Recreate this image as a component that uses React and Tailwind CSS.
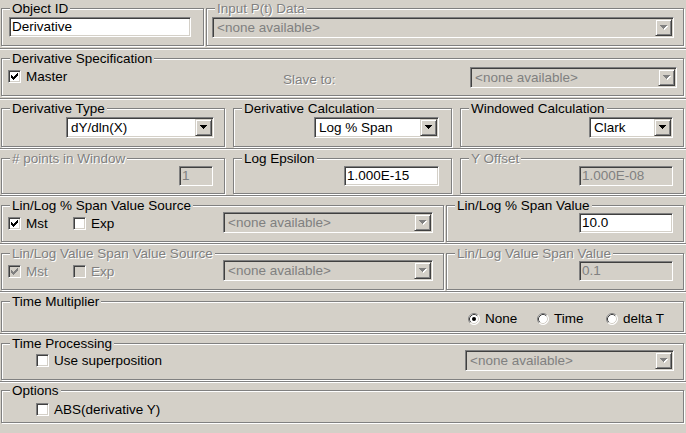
import React from "react";

const disabledText = "text-[#808080] [text-shadow:1px_1px_0_#fff]";
const sunken =
  "border border-t-[#808080] border-l-[#808080] border-b-white border-r-white p-[1px] shadow-[inset_1px_1px_0_#404040,inset_-1px_-1px_0_#d4d0c8]";
const sep = "border-t border-[#808080] shadow-[inset_0_1px_0_#fff]";

function Group({ label, disabled, className = "", children }) {
  return (
    <div
      className={`relative shrink-0 border border-[#808080] shadow-[inset_1px_1px_0_#fff,1px_1px_0_#fff] ${className}`}
    >
      <span
        className={`absolute -top-[8px] left-[8px] px-[2px] bg-[#d4d0c8] leading-[15px] whitespace-nowrap ${
          disabled ? disabledText : "text-black"
        }`}
      >
        {label}
      </span>
      {children}
    </div>
  );
}

function Arrow({ disabled }) {
  const c = disabled ? "#808080" : "#000";
  const rows = [
    [0, 0, 7],
    [1, 1, 5],
    [2, 2, 3],
    [3, 3, 1],
  ];
  return (
    <svg width="8" height="5" shapeRendering="crispEdges" className="block">
      {disabled &&
        rows.map(([x, y, w]) => (
          <rect key={"s" + y} x={x + 1} y={y + 1} width={w} height="1" fill="#fff" />
        ))}
      {rows.map(([x, y, w]) => (
        <rect key={y} x={x} y={y} width={w} height="1" fill={c} />
      ))}
    </svg>
  );
}

function Combo({ value, disabled, className = "" }) {
  return (
    <div
      className={`flex h-[21px] shrink-0 ${sunken} ${disabled ? "bg-[#d4d0c8]" : "bg-white"} ${className}`}
    >
      <span
        className={`flex-1 pl-[3px] leading-[17px] whitespace-nowrap overflow-hidden ${
          disabled ? "text-[#808080]" : "text-black"
        }`}
      >
        {value}
      </span>
      <div className="w-[17px] h-[17px] flex items-center justify-center bg-[#d4d0c8] border border-t-[#d4d0c8] border-l-[#d4d0c8] border-b-[#404040] border-r-[#404040] shadow-[inset_1px_1px_0_#fff,inset_-1px_-1px_0_#808080]">
        <Arrow disabled={disabled} />
      </div>
    </div>
  );
}

function TextBox({ value, disabled, className = "" }) {
  return (
    <div
      className={`h-[20px] shrink-0 ${sunken} ${disabled ? "bg-[#d4d0c8]" : "bg-white"} ${className}`}
    >
      <span
        className={`block pl-[1px] leading-[16px] whitespace-nowrap ${
          disabled ? "text-[#808080]" : "text-black"
        }`}
      >
        {value}
      </span>
    </div>
  );
}

function Checkbox({ checked, disabled }) {
  const starts = [2, 3, 4, 3, 2, 1, 0];
  return (
    <div
      className={`w-[13px] h-[13px] shrink-0 ${sunken} ${disabled ? "bg-[#d4d0c8]" : "bg-white"}`}
    >
      {checked && (
        <svg width="9" height="9" shapeRendering="crispEdges" className="block">
          {starts.map((s, i) => (
            <rect
              key={i}
              x={1 + i}
              y={1 + s}
              width="1"
              height="3"
              fill={disabled ? "#808080" : "#000"}
            />
          ))}
        </svg>
      )}
    </div>
  );
}

function CheckItem({ label, checked, disabled, className = "" }) {
  return (
    <div className={`flex items-center gap-[5px] ${className}`}>
      <Checkbox checked={checked} disabled={disabled} />
      <span className={`leading-[15px] whitespace-nowrap ${disabled ? disabledText : "text-black"}`}>
        {label}
      </span>
    </div>
  );
}

function Radio({ checked }) {
  return (
    <svg width="12" height="12" className="block shrink-0">
      <circle cx="6" cy="6" r="5.5" fill="#fff" />
      <path d="M2.11 9.89 A5.5 5.5 0 0 1 9.89 2.11" stroke="#808080" strokeWidth="1" fill="none" />
      <path d="M9.89 2.11 A5.5 5.5 0 0 1 2.11 9.89" stroke="#ffffff" strokeWidth="1" fill="none" />
      <path d="M2.82 9.18 A4.5 4.5 0 0 1 9.18 2.82" stroke="#404040" strokeWidth="1" fill="none" />
      <path d="M9.18 2.82 A4.5 4.5 0 0 1 2.82 9.18" stroke="#d4d0c8" strokeWidth="1" fill="none" />
      {checked && <circle cx="6" cy="6" r="2" fill="#000" />}
    </svg>
  );
}

function RadioItem({ label, checked, className = "" }) {
  return (
    <div className={`flex items-center gap-[5px] ${className}`}>
      <Radio checked={checked} />
      <span className="leading-[15px] whitespace-nowrap">{label}</span>
    </div>
  );
}

const NONE = "<none available>";

export default function App() {
  return (
    <div className="w-[686px] h-[433px] overflow-hidden bg-[#d4d0c8] text-black text-[13.5px] font-['Liberation_Sans',Arial,sans-serif]">
      {/* Row 1 */}
      <div className="flex items-start h-[48px] pl-[1px] pt-[8px]">
        <Group label="Object ID" className="w-[203px] h-[38px]">
          <TextBox value="Derivative" className="ml-[7px] mt-[8px] w-[182px]" />
        </Group>
        <Group label="Input P(t) Data" disabled className="ml-[2px] w-[478px] h-[38px]">
          <Combo value={NONE} disabled className="ml-[5px] mt-[8px] w-[462px]" />
        </Group>
      </div>

      {/* Row 2 */}
      <div className={`h-[50px] pl-[1px] pt-[9px] ${sep}`}>
        <Group label="Derivative Specification" className="w-[683px] h-[38px]">
          <div className="flex items-start">
            <CheckItem label="Master" checked className="ml-[6px] mt-[10px] w-[275px]" />
            <span className={`mt-[13px] leading-[15px] whitespace-nowrap ${disabledText}`}>Slave to:</span>
            <Combo value={NONE} disabled className="ml-auto mr-[6px] mt-[8px] w-[207px]" />
          </div>
        </Group>
      </div>

      {/* Row 3 */}
      <div className={`flex items-start gap-[8px] h-[50px] pl-[1px] pt-[9px] ${sep}`}>
        <Group label="Derivative Type" className="w-[224px] h-[39px]">
          <Combo value="dY/dln(X)" className="ml-[64px] mt-[8px] w-[148px]" />
        </Group>
        <Group label="Derivative Calculation" className="w-[219px] h-[39px]">
          <Combo value="Log % Span" className="ml-[80px] mt-[8px] w-[125px]" />
        </Group>
        <Group label="Windowed Calculation" className="w-[224px] h-[39px]">
          <Combo value="Clark" className="ml-[128px] mt-[8px] w-[84px]" />
        </Group>
      </div>

      {/* Row 4 */}
      <div className={`flex items-start gap-[8px] h-[47px] pl-[1px] pt-[9px] ${sep}`}>
        <Group label="# points in Window" disabled className="w-[224px] h-[36px]">
          <TextBox value="1" disabled className="ml-[177px] mt-[7px] w-[34px]" />
        </Group>
        <Group label="Log Epsilon" className="w-[219px] h-[36px]">
          <TextBox value="1.000E-15" className="ml-[110px] mt-[7px] w-[95px]" />
        </Group>
        <Group label="Y Offset" disabled className="w-[224px] h-[36px]">
          <TextBox value="1.000E-08" disabled className="ml-[118px] mt-[7px] w-[94px]" />
        </Group>
      </div>

      {/* Row 5 */}
      <div className={`flex items-start gap-[2px] h-[48px] pl-[1px] pt-[9px] ${sep}`}>
        <Group label="Lin/Log % Span Value Source" className="w-[443px] h-[37px]">
          <div className="flex items-start">
            <CheckItem label="Mst" checked className="ml-[6px] mt-[10px] w-[65px]" />
            <CheckItem label="Exp" className="mt-[10px]" />
            <Combo value={NONE} disabled className="ml-auto mr-[10px] mt-[6px] w-[210px]" />
          </div>
        </Group>
        <Group label="Lin/Log % Span Value" className="w-[238px] h-[37px]">
          <TextBox value="10.0" className="ml-[132px] mt-[7px] w-[94px]" />
        </Group>
      </div>

      {/* Row 6 */}
      <div className={`flex items-start gap-[2px] h-[48px] pl-[1px] pt-[9px] ${sep}`}>
        <Group label="Lin/Log Value Span Value Source" disabled className="w-[443px] h-[37px]">
          <div className="flex items-start">
            <CheckItem label="Mst" checked disabled className="ml-[6px] mt-[10px] w-[65px]" />
            <CheckItem label="Exp" disabled className="mt-[10px]" />
            <Combo value={NONE} disabled className="ml-auto mr-[10px] mt-[6px] w-[210px]" />
          </div>
        </Group>
        <Group label="Lin/Log Value Span Value" disabled className="w-[238px] h-[37px]">
          <TextBox value="0.1" disabled className="ml-[132px] mt-[7px] w-[94px]" />
        </Group>
      </div>

      {/* Row 7 */}
      <div className={`h-[42px] pl-[1px] pt-[9px] ${sep}`}>
        <Group label="Time Multiplier" className="w-[683px] h-[31px]">
          <div className="ml-[466px] mt-[9px] flex">
            <RadioItem label="None" checked className="w-[69px]" />
            <RadioItem label="Time" className="w-[69px]" />
            <RadioItem label="delta T" />
          </div>
        </Group>
      </div>

      {/* Row 8 */}
      <div className={`h-[48px] pl-[1px] pt-[9px] ${sep}`}>
        <Group label="Time Processing" className="w-[683px] h-[37px]">
          <div className="flex items-start">
            <CheckItem label="Use superposition" className="ml-[34px] mt-[9px]" />
            <Combo value={NONE} disabled className="ml-auto mr-[9px] mt-[6px] w-[209px]" />
          </div>
        </Group>
      </div>

      {/* Row 9 */}
      <div className={`h-[52px] pl-[1px] pt-[8px] ${sep}`}>
        <Group label="Options" className="w-[683px] h-[33px]">
          <CheckItem label="ABS(derivative Y)" className="ml-[34px] mt-[11px]" />
        </Group>
      </div>
    </div>
  );
}
